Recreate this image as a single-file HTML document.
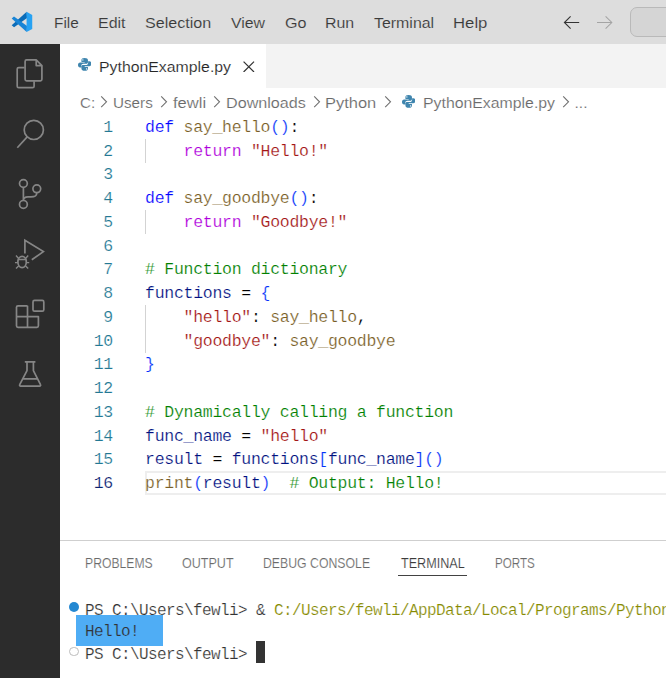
<!DOCTYPE html>
<html><head><meta charset="utf-8"><title>PythonExample.py - Visual Studio Code</title>
<style>
*{box-sizing:border-box;margin:0;padding:0}
html,body{width:666px;height:678px;overflow:hidden;background:#fff}
body{position:relative;font-family:"Liberation Sans",sans-serif;color:#333}
.abs{position:absolute}
.tx{-webkit-text-stroke:0.15px #fff;position:absolute;transform-origin:0 0;line-height:20px;white-space:nowrap;font-family:"Liberation Sans",sans-serif}
#title{left:0;top:0;width:666px;height:44px;background:#dddddd}
#act{left:0;top:44px;width:60px;height:634px;background:#2c2c2c}
#tabs{left:60px;top:44px;width:606px;height:44px;background:#f3f3f3}
#tab{left:60px;top:44px;width:206px;height:44px;background:#fff}
#code{-webkit-text-stroke:0.2px #fff;left:0;top:0;width:666px;height:0;font-family:"Liberation Mono",monospace;font-size:16.5px;letter-spacing:-0.275px;white-space:pre;color:#000}
.ln{position:absolute;left:0;height:23.75px;width:666px}
.ln .n{position:absolute;left:60px;width:53px;text-align:right;color:#237893;line-height:23.75px}
.ln .n.cur{color:#0b216f}
.ln .c{position:absolute;left:145px;line-height:23.75px;color:#001080}
.k{color:#0000ff}.r{color:#af00db}.s{color:#a31515}.f{color:#795e26}.g{color:#008000}.b{color:#0431fa}.d{color:#000}
.guide{position:absolute;left:145px;width:1px;background:#d3d3d3}
#term{-webkit-text-stroke:0.2px #fff;font-family:"Liberation Mono",monospace;font-size:16px;white-space:pre;color:#333;letter-spacing:-0.6px}
.tl{position:absolute;left:85px;line-height:22px;height:22px}
#m1,#m2,#m3,#m4,#m5,#m6,#m7,#m8{-webkit-text-stroke-color:#ddd}
</style></head><body>
<div id="title" class="abs"></div>
<svg class="abs" style="left:4px;top:4px" width="40" height="36" viewBox="0 0 666 599"><polygon points="378,128 384,232 168,388 128,352" fill="#0b6cb8"/><polygon points="128,240 166,208 384,366 378,468" fill="#1884d6"/><polygon points="376,128 470,184 470,416 376,468" fill="#27a2f3"/></svg>
<svg class="abs" style="left:562px;top:14px" width="20" height="18" viewBox="0 0 20 18"><path d="M17.2 8.5 H2.6 M8.6 2.3 L2.4 8.5 L8.6 14.7" fill="none" stroke="#333" stroke-width="1.1"/></svg>
<svg class="abs" style="left:595px;top:14px" width="20" height="18" viewBox="0 0 20 18"><path d="M2 8.5 H16.6 M10.6 2.3 L16.8 8.5 L10.6 14.7" fill="none" stroke="#a4a4a4" stroke-width="1.05"/></svg>
<div class="abs" style="left:630px;top:7px;width:60px;height:30px;border:1px solid #b9b9b9;border-radius:7px;background:#d5d5d5"></div>
<div id="act" class="abs"></div>
<svg class="abs" style="left:0;top:44px" width="60" height="634" viewBox="0 44 60 634" fill="none" stroke="#868686" stroke-width="1.7" stroke-linejoin="round" stroke-linecap="butt">
<path d="M26.6 59.9 H36.2 L41.9 65.6 V79.3 a1.5 1.5 0 0 1 -1.5 1.5 H26.6 a1.5 1.5 0 0 1 -1.5 -1.5 V61.4 a1.5 1.5 0 0 1 1.5 -1.5 Z M36.2 59.9 V65.6 H41.9"/>
<path d="M24.6 67.6 H18.7 a1.5 1.5 0 0 0 -1.5 1.5 V86.2 a1.5 1.5 0 0 0 1.5 1.5 H32.6 a1.5 1.5 0 0 0 1.5 -1.5 V81.3"/>
<circle cx="33.8" cy="129.9" r="9.6"/>
<path d="M27.2 136.9 L17.3 147.7"/>
<circle cx="23.4" cy="183.5" r="3.9"/>
<circle cx="23.4" cy="204.4" r="3.9"/>
<circle cx="36.8" cy="188.8" r="3.9"/>
<path d="M23.4 187.4 V200.5 M36.8 192.7 C36.8 196.7 34 196.8 31 196.8 H28 C25 196.8 23.4 197.5 23.4 200.5"/>
<path d="M24.9 253.6 V240.2 L43.4 251.6 L31.8 259.8" stroke-linejoin="miter"/>
<ellipse cx="22.1" cy="262" rx="4.2" ry="5.6"/>
<path d="M17.9 259.5 H26.3 M17.9 262.6 H15 M26.3 262.6 H29.2 M18.6 258.4 L16 255.6 M25.6 258.4 L28.2 255.6 M18.6 266 L16 268.6 M25.6 266 L28.2 268.6" stroke-width="1.4"/>
<path d="M27.5 305.8 H18 a1.5 1.5 0 0 0 -1.5 1.5 V325.8 a1.5 1.5 0 0 0 1.5 1.5 H36.9 a1.5 1.5 0 0 0 1.5 -1.5 V316.6 H16.5 M27.5 305.8 V327.3"/>
<rect x="33" y="300.4" width="10.8" height="10.8" rx="1.5"/>
<path d="M24.8 361.8 H35.4 M27 361.8 V370.6 L19.7 384.6 a1 1 0 0 0 0.9 1.5 H39.6 a1 1 0 0 0 0.9 -1.5 L33.4 370.6 V361.8 M22.8 378.8 H37.4"/>
</svg>
<div id="tabs" class="abs"></div>
<div id="tab" class="abs"></div>
<svg class="abs" style="left:243.2px;top:60.6px" width="11.6" height="11.6" viewBox="0 0 12 12"><path d="M0.6 0.6 L11.4 11.4 M11.4 0.6 L0.6 11.4" stroke="#333" stroke-width="1.25" fill="none"/></svg>
<svg class="abs" style="left:77.8px;top:58.3px" width="13.4" height="12.8" preserveAspectRatio="none" viewBox="0 0 16 16"><path fill="#3f85ae" d="M7.9 0 C5.2 0 4.1 1 4.1 2.9 V4.9 H8 V5.6 H2.6 C0.9 5.6 0 7 0 8.9 C0 10.8 0.9 12 2.4 12 H3.9 V9.7 C3.9 8.2 5 7.1 6.5 7.1 H10 C11.1 7.1 11.9 6.3 11.9 5.2 V2.9 C11.9 1 10.4 0 7.9 0 Z M5.8 1.6 A0.8 0.8 0 1 1 5.8 3.2 A0.8 0.8 0 1 1 5.8 1.6 Z M8.1 16 C10.8 16 11.9 15 11.9 13.1 V11.1 H8 V10.4 H13.4 C15.1 10.4 16 9 16 7.1 C16 5.2 15.1 4 13.6 4 H12.1 V6.3 C12.1 7.8 11 8.9 9.5 8.9 H6 C4.9 8.9 4.1 9.7 4.1 10.8 V13.1 C4.1 15 5.6 16 8.1 16 Z M10.2 14.4 A0.8 0.8 0 1 1 10.2 12.8 A0.8 0.8 0 1 1 10.2 14.4 Z" fill-rule="evenodd"/></svg>
<svg class="abs" style="left:401.8px;top:94.8px" width="13.4" height="12.8" preserveAspectRatio="none" viewBox="0 0 16 16"><path fill="#3f85ae" d="M7.9 0 C5.2 0 4.1 1 4.1 2.9 V4.9 H8 V5.6 H2.6 C0.9 5.6 0 7 0 8.9 C0 10.8 0.9 12 2.4 12 H3.9 V9.7 C3.9 8.2 5 7.1 6.5 7.1 H10 C11.1 7.1 11.9 6.3 11.9 5.2 V2.9 C11.9 1 10.4 0 7.9 0 Z M5.8 1.6 A0.8 0.8 0 1 1 5.8 3.2 A0.8 0.8 0 1 1 5.8 1.6 Z M8.1 16 C10.8 16 11.9 15 11.9 13.1 V11.1 H8 V10.4 H13.4 C15.1 10.4 16 9 16 7.1 C16 5.2 15.1 4 13.6 4 H12.1 V6.3 C12.1 7.8 11 8.9 9.5 8.9 H6 C4.9 8.9 4.1 9.7 4.1 10.8 V13.1 C4.1 15 5.6 16 8.1 16 Z M10.2 14.4 A0.8 0.8 0 1 1 10.2 12.8 A0.8 0.8 0 1 1 10.2 14.4 Z" fill-rule="evenodd"/></svg>
<svg class="abs" style="left:100.3px;top:96px" width="8" height="12" viewBox="0 0 8 12"><path d="M1.2 0.4 L6.5 5.8 L1.2 11.2" fill="none" stroke="#707070" stroke-width="1.1"/></svg>
<svg class="abs" style="left:160.3px;top:96px" width="8" height="12" viewBox="0 0 8 12"><path d="M1.2 0.4 L6.5 5.8 L1.2 11.2" fill="none" stroke="#707070" stroke-width="1.1"/></svg>
<svg class="abs" style="left:213.3px;top:96px" width="8" height="12" viewBox="0 0 8 12"><path d="M1.2 0.4 L6.5 5.8 L1.2 11.2" fill="none" stroke="#707070" stroke-width="1.1"/></svg>
<svg class="abs" style="left:313.2px;top:96px" width="8" height="12" viewBox="0 0 8 12"><path d="M1.2 0.4 L6.5 5.8 L1.2 11.2" fill="none" stroke="#707070" stroke-width="1.1"/></svg>
<svg class="abs" style="left:383.5px;top:96px" width="8" height="12" viewBox="0 0 8 12"><path d="M1.2 0.4 L6.5 5.8 L1.2 11.2" fill="none" stroke="#707070" stroke-width="1.1"/></svg>
<svg class="abs" style="left:561.5px;top:96px" width="8" height="12" viewBox="0 0 8 12"><path d="M1.2 0.4 L6.5 5.8 L1.2 11.2" fill="none" stroke="#707070" stroke-width="1.1"/></svg>
<div class="guide" style="top:138.75px;height:23.75px"></div>
<div class="guide" style="top:210px;height:23.75px"></div>
<div class="guide" style="top:305px;height:47.5px"></div>
<div class="abs" style="left:145px;top:471.25px;width:540px;height:24px;border:2px solid #eeeeee"></div>
<div id="code" class="abs">
<div class="ln" style="top:115.75px"><span class="n">1</span><span class="c"><span class="k">def</span> <span class="f">say_hello</span><span class="b">()</span><span class="d">:</span></span></div>
<div class="ln" style="top:139.50px"><span class="n">2</span><span class="c">    <span class="r">return</span> <span class="s">"Hello!"</span></span></div>
<div class="ln" style="top:163.25px"><span class="n">3</span><span class="c"></span></div>
<div class="ln" style="top:187.00px"><span class="n">4</span><span class="c"><span class="k">def</span> <span class="f">say_goodbye</span><span class="b">()</span><span class="d">:</span></span></div>
<div class="ln" style="top:210.75px"><span class="n">5</span><span class="c">    <span class="r">return</span> <span class="s">"Goodbye!"</span></span></div>
<div class="ln" style="top:234.50px"><span class="n">6</span><span class="c"></span></div>
<div class="ln" style="top:258.25px"><span class="n">7</span><span class="c"><span class="g"># Function dictionary</span></span></div>
<div class="ln" style="top:282.00px"><span class="n">8</span><span class="c">functions <span class="d">=</span> <span class="b">{</span></span></div>
<div class="ln" style="top:305.75px"><span class="n">9</span><span class="c">    <span class="s">"hello"</span><span class="d">:</span> <span class="f">say_hello</span><span class="d">,</span></span></div>
<div class="ln" style="top:329.50px"><span class="n">10</span><span class="c">    <span class="s">"goodbye"</span><span class="d">:</span> <span class="f">say_goodbye</span></span></div>
<div class="ln" style="top:353.25px"><span class="n">11</span><span class="c"><span class="b">}</span></span></div>
<div class="ln" style="top:377.00px"><span class="n">12</span><span class="c"></span></div>
<div class="ln" style="top:400.75px"><span class="n">13</span><span class="c"><span class="g"># Dynamically calling a function</span></span></div>
<div class="ln" style="top:424.50px"><span class="n">14</span><span class="c">func_name <span class="d">=</span> <span class="s">"hello"</span></span></div>
<div class="ln" style="top:448.25px"><span class="n">15</span><span class="c">result <span class="d">=</span> functions<span class="b">[</span>func_name<span class="b">]()</span></span></div>
<div class="ln" style="top:472.00px"><span class="n cur">16</span><span class="c"><span class="f">print</span><span class="b">(</span>result<span class="b">)</span>  <span class="g"># Output: Hello!</span></span></div>
</div>
<div class="abs" style="left:60px;top:540px;width:606px;height:1px;background:#cfcfcf"></div>
<div class="abs" style="left:398px;top:575px;width:69px;height:1px;background:#424242"></div>
<span id="m1" class="tx" style="left:53.85px;top:12.78px;font-size:15.5px;color:#3a3a3a;transform:scaleX(0.9903)">File</span>
<span id="m2" class="tx" style="left:97.93px;top:12.78px;font-size:15.5px;color:#3a3a3a;transform:scaleX(1.0296)">Edit</span>
<span id="m3" class="tx" style="left:144.76px;top:12.78px;font-size:15.5px;color:#3a3a3a;transform:scaleX(1.0394)">Selection</span>
<span id="m4" class="tx" style="left:230.51px;top:12.78px;font-size:15.5px;color:#3a3a3a;transform:scaleX(1.0220)">View</span>
<span id="m5" class="tx" style="left:284.60px;top:12.78px;font-size:15.5px;color:#3a3a3a;transform:scaleX(1.0415)">Go</span>
<span id="m6" class="tx" style="left:324.84px;top:12.78px;font-size:15.5px;color:#3a3a3a;transform:scaleX(1.0269)">Run</span>
<span id="m7" class="tx" style="left:374.30px;top:12.78px;font-size:15.5px;color:#3a3a3a;transform:scaleX(1.0266)">Terminal</span>
<span id="m8" class="tx" style="left:453.39px;top:12.78px;font-size:15.5px;color:#3a3a3a;transform:scaleX(1.0797)">Help</span>
<span id="t1" class="tx" style="left:99.34px;top:56.78px;font-size:15.5px;color:#262626;transform:scaleX(1.0217)">PythonExample.py</span>
<span id="b1" class="tx" style="left:79.60px;top:93.18px;font-size:15.5px;color:#6a6a6a;transform:scaleX(0.9756)">C:</span>
<span id="b2" class="tx" style="left:112.94px;top:93.18px;font-size:15.5px;color:#6a6a6a;transform:scaleX(0.9818)">Users</span>
<span id="b3" class="tx" style="left:173.40px;top:93.18px;font-size:15.5px;color:#6a6a6a;transform:scaleX(1.0684)">fewli</span>
<span id="b4" class="tx" style="left:226.13px;top:93.18px;font-size:15.5px;color:#6a6a6a;transform:scaleX(1.0410)">Downloads</span>
<span id="b5" class="tx" style="left:325.35px;top:93.18px;font-size:15.5px;color:#6a6a6a;transform:scaleX(1.0623)">Python</span>
<span id="b6" class="tx" style="left:423.34px;top:93.18px;font-size:15.5px;color:#6a6a6a;transform:scaleX(1.0215)">PythonExample.py</span>
<span id="b7" class="tx" style="left:574.54px;top:93.18px;font-size:15.5px;color:#6a6a6a;transform:scaleX(1.0000)">...</span>
<span id="p1" class="tx" style="left:84.84px;top:554.06px;font-size:13.75px;color:#6a6a6a;transform:scaleX(0.8860)">PROBLEMS</span>
<span id="p2" class="tx" style="left:181.82px;top:554.06px;font-size:13.75px;color:#6a6a6a;transform:scaleX(0.9126)">OUTPUT</span>
<span id="p3" class="tx" style="left:263.22px;top:554.06px;font-size:13.75px;color:#6a6a6a;transform:scaleX(0.8926)">DEBUG CONSOLE</span>
<span id="p4" class="tx" style="left:401.10px;top:554.06px;font-size:13.75px;color:#3b3b3b;transform:scaleX(0.9167)">TERMINAL</span>
<span id="p5" class="tx" style="left:494.84px;top:554.06px;font-size:13.75px;color:#6a6a6a;transform:scaleX(0.8444)">PORTS</span>
<div id="term" class="abs" style="left:0;top:0">
<div class="abs" style="left:76px;top:615px;width:87px;height:31px;background:#4fadf5"></div>
<div class="tl" style="top:599.8px">PS C:\Users\fewli&gt; &amp; <span style="color:#868a00">C:/Users/fewli/AppData/Local/Programs/Python</span></div>
<div class="tl" style="top:621.4px;-webkit-text-stroke-color:#4fadf5">Hello!</div>
<div class="tl" style="top:643.6px">PS C:\Users\fewli&gt; </div>
<div class="abs" style="left:256px;top:641px;width:9px;height:22px;background:#333"></div>
<div class="abs" style="left:69px;top:602px;width:10px;height:10px;border-radius:50%;background:#2488d2"></div>
<div class="abs" style="left:69px;top:646.6px;left:69.2px;width:9.6px;height:9.6px;border-radius:50%;border:1.5px solid #bcbcbc"></div>
</div>
</body></html>
